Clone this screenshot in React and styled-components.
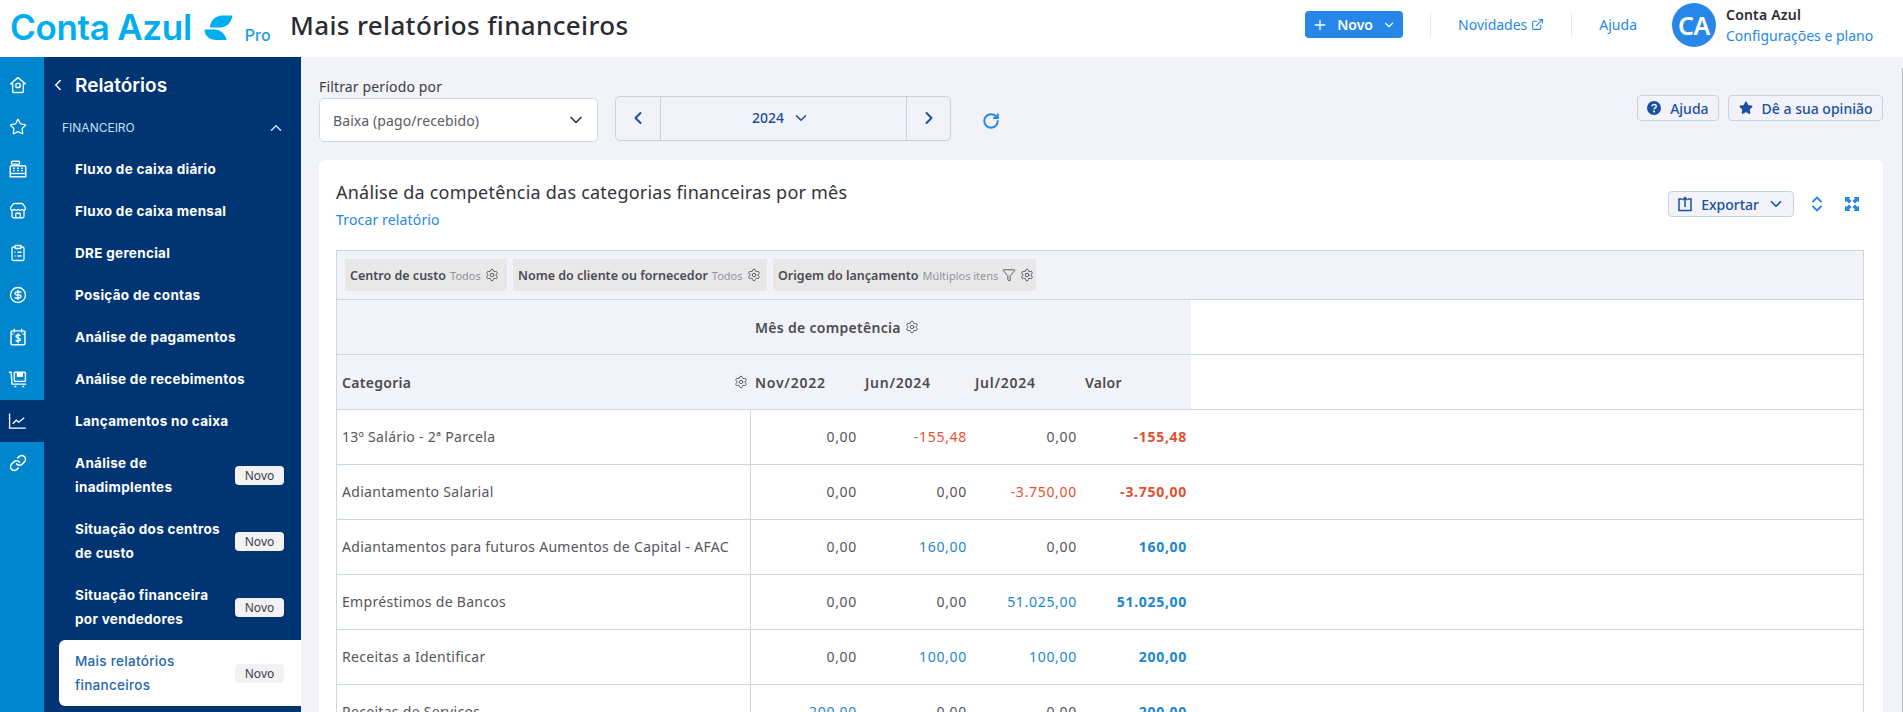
import React from "react";
import styled, { createGlobalStyle } from "styled-components";
import {
  ChevronDown,
  ChevronLeft,
  ChevronRight,
  ChevronUp,
  Plus,
  ExternalLink,
  Star,
  Store,
  ClipboardList,
  CircleDollarSign,
  RotateCw,
  Link,
  Filter,
  Settings,
} from "lucide-react";

const GlobalStyle = createGlobalStyle`
  html, body {
    margin: 0;
    height: 100%;
    overflow: hidden;
    background: #f1f3f8;
    font-family: "Noto Sans", "Open Sans", sans-serif;
  }
  * { box-sizing: border-box; }
`;

// Header
const Page = styled.div`
  width: 1903px;
  height: 712px;
  display: flex;
  flex-direction: column;
  overflow: hidden;
`;
const Header = styled.header`
  height: 57px;
  flex: none;
  background: #fff;
  display: flex;
  align-items: center;
  padding-bottom: 8px;
`;
const Logo = styled.div`
  width: 290px;
  flex: none;
  display: flex;
  align-items: center;
  padding-left: 10px;
  padding-top: 6px;
  gap: 12px;
`;
const LogoText = styled.span`
  font-family: "Inter", sans-serif;
  font-weight: 600;
  font-size: 35px;
  letter-spacing: -0.3px;
  word-spacing: -1px;
  color: #00aeef;
  line-height: 1;
`;
const LogoPro = styled.span`
  font-family: "Inter", sans-serif;
  font-weight: 500;
  font-size: 16px;
  color: #1a9de0;
  margin-top: 14px;
`;
const PageTitle = styled.h1`
  flex: 1;
  margin: 0;
  font-size: 26px;
  font-weight: 500;
  letter-spacing: 0.35px;
  color: #2b2b33;
`;
const NewButton = styled.button`
  width: 98px;
  height: 27px;
  border: 0;
  border-radius: 4px;
  background: #2687e9;
  color: #fff;
  font: 600 14px "Noto Sans", sans-serif;
  display: flex;
  align-items: center;
  justify-content: center;
  gap: 9px;
  margin-right: 27px;
`;
const Divider = styled.span`
  width: 1px;
  height: 26px;
  background: #e8ebf1;
`;
const HeaderLink = styled.a`
  font-size: 14px;
  color: #2687e9;
  display: flex;
  align-items: center;
  gap: 4px;
  margin: 0 27px;
`;
const Avatar = styled.div`
  width: 44px;
  height: 44px;
  border-radius: 50%;
  background: #2687e9;
  color: #fff;
  font-size: 25px;
  font-weight: 600;
  letter-spacing: -0.5px;
  display: flex;
  align-items: center;
  justify-content: center;
  margin: 0 10px 0 8px;
`;
const UserBlock = styled.div`
  display: flex;
  flex-direction: column;
  width: 177px;
`;
const UserName = styled.span`
  font-size: 14px;
  font-weight: 600;
  letter-spacing: 0.2px;
  color: #2b2b33;
  line-height: 21px;
`;
const UserLink = styled.span`
  font-size: 14px;
  color: #2687e9;
  line-height: 21px;
`;

// Sidebar
const Body = styled.div`
  flex: 1;
  display: flex;
  min-height: 0;
`;
const Rail = styled.nav`
  width: 44px;
  flex: none;
  background: #0085cf;
  padding-top: 7px;
`;
const RailItem = styled.div`
  height: 42px;
  display: flex;
  align-items: center;
  justify-content: center;
  padding-right: 9px;
  color: #fff;
  background: ${(props) => (props.$active ? "#003473" : "transparent")};
`;
const Side = styled.aside`
  width: 257px;
  flex: none;
  background: #003473;
  color: #fff;
`;
const SideTitle = styled.div`
  height: 56px;
  padding-left: 5px;
  display: flex;
  align-items: center;
  gap: 8px;
  font: 600 19px "Inter", sans-serif;
`;
const SideGroup = styled.div`
  height: 35px;
  padding: 0 16px 6px 18px;
  display: flex;
  align-items: center;
  justify-content: space-between;
  color: #bfe2fb;
  font: 400 12px "Inter", sans-serif;
`;
const SideItem = styled.div`
  min-height: ${(props) => (props.$tall ? "66px" : "42px")};
  margin-left: 15px;
  padding: 0 17px 0 16px;
  display: flex;
  align-items: center;
  justify-content: space-between;
  border-radius: ${(props) => (props.$selected ? "6px 0 0 6px" : "0")};
  background: ${(props) => (props.$selected ? "#fff" : "transparent")};
  color: ${(props) => (props.$selected ? "#1f67b3" : "#fff")};
  font: ${(props) => (props.$selected ? 500 : 700)} 13.5px/24px "Inter", sans-serif;
  letter-spacing: 0.3px;
`;
const SideLabel = styled.span`
  width: ${(props) => (props.$narrow ? "155px" : "auto")};
  white-space: ${(props) => (props.$narrow ? "normal" : "nowrap")};
`;
const NewBadge = styled.span`
  width: 49px;
  height: 19px;
  border-radius: 4px;
  background: #f2f2f4;
  color: #3c3c44;
  font: 400 12px/19px "Noto Sans", sans-serif;
  letter-spacing: 0;
  text-align: center;
`;

// Content
const Main = styled.main`
  position: relative;
  flex: 1;
  min-width: 0;
  padding: 0 20px 0 18px;
  &::after {
    content: "";
    position: absolute;
    top: 11px;
    right: 0;
    bottom: 0;
    width: 1px;
    background: #b8bac0;
  }
`;
const Toolbar = styled.div`
  height: 103px;
  display: flex;
  align-items: flex-start;
`;
const FilterField = styled.div`
  width: 279px;
  padding-top: 19px;
  margin-right: 17px;
`;
const FieldLabel = styled.div`
  font-size: 14px;
  line-height: 22px;
  letter-spacing: 0.15px;
  color: #3c3c44;
`;
const Select = styled.div`
  height: 44px;
  background: #fff;
  border: 1px solid #cfd8e4;
  border-radius: 5px;
  padding: 0 11px 0 13px;
  display: flex;
  align-items: center;
  justify-content: space-between;
  font-size: 14px;
  letter-spacing: 0.1px;
  color: #5a5a64;
`;
const YearStepper = styled.div`
  width: 336px;
  height: 45px;
  margin-top: 39px;
  border: 1px solid #c5d2e0;
  border-radius: 5px;
  display: grid;
  grid-template-columns: 44px 1fr 44px;
  color: #1b4fa0;
`;
const StepCell = styled.div`
  display: flex;
  align-items: center;
  justify-content: center;
  gap: 8px;
  padding: ${(props) => (props.$year ? "0 5px 2px 0" : "0 0 2px")};
  font-size: 14px;
  font-weight: 500;
  border-left: ${(props) => (props.$line ? "1px solid #c5d2e0" : "0")};
`;
const Refresh = styled.div`
  margin: 55px 0 0 31px;
  color: #2687e9;
  flex: 1;
`;
const ToolActions = styled.div`
  display: flex;
  gap: 9px;
  margin-top: 38px;
`;
const GhostButton = styled.button`
  height: 26px;
  padding: 0 ${(props) => props.$pad || "9.5px"};
  background: #f1f3f8;
  border: 1px solid #c5d2e0;
  border-radius: 4px;
  color: #1b4fa0;
  font: 500 14px "Noto Sans", sans-serif;
  display: flex;
  align-items: center;
  gap: ${(props) => props.$gap || "9px"};
`;
const Card = styled.section`
  background: #fff;
  border-radius: 6px 6px 0 0;
  height: 560px;
  padding: 20px 19px 0 17px;
`;
const CardHead = styled.div`
  height: 70px;
  display: flex;
  justify-content: space-between;
  align-items: flex-start;
`;
const CardTitle = styled.h2`
  margin: 0;
  font-size: 18px;
  line-height: 25px;
  font-weight: 400;
  letter-spacing: 0.22px;
  color: #33333b;
`;
const SwapLink = styled.a`
  display: block;
  margin-top: 5px;
  font-size: 14px;
  line-height: 20px;
  letter-spacing: 0.15px;
  color: #2687e9;
`;
const CardActions = styled.div`
  display: flex;
  align-items: center;
  color: #2687e9;
  margin: 11px -5px 0 0;
`;
const IconSlot = styled.span`
  width: 35px;
  display: flex;
  justify-content: center;
  margin-left: ${(props) => props.$left || "0"};
`;

// Table
const Table = styled.div`
  border: 1px solid #cdd6e2;
  border-bottom: 0;
  color: #55555d;
`;
const FilterRow = styled.div`
  height: 49px;
  background: #f1f3f8;
  border-bottom: 1px solid #cdd6e2;
  padding: 8px 0 0 8px;
  display: flex;
  gap: 6px;
`;
const Chip = styled.div`
  height: 32px;
  width: ${(props) => props.$w}px;
  background: #e8e8e8;
  padding: 0 ${(props) => props.$right || "5px"} 0 5px;
  display: flex;
  align-items: center;
  gap: 4px;
  white-space: nowrap;
  font-size: 12.5px;
  font-weight: 600;
  color: #4b4b53;
  svg {
    flex: none;
  }
`;
const ChipHint = styled.span`
  font-size: 11px;
  font-weight: 400;
  color: #94949c;
  flex: ${(props) => (props.$grow ? 1 : "none")};
`;
const HeadRow = styled.div`
  height: 55px;
  border-bottom: 1px solid #cdd6e2;
  display: flex;
`;
const HeadFill = styled.div`
  width: 854px;
  background: #f1f3f8;
  display: grid;
  grid-template-columns: 414px repeat(4, 110px);
  align-items: center;
  font-size: 14px;
  font-weight: 600;
  letter-spacing: 0.3px;
  color: #4b4b53;
`;
const HeadCell = styled.div`
  padding-left: ${(props) => (props.$between ? "5px" : "4px")};
  display: flex;
  align-items: center;
  justify-content: ${(props) => (props.$between ? "space-between" : "flex-start")};
  padding-right: ${(props) => (props.$between ? "3px" : "0")};
  gap: 4px;
  white-space: nowrap;
  letter-spacing: ${(props) => (props.$month ? "0.75px" : "inherit")};
  grid-column: ${(props) => props.$span || "auto"};
`;
const Row = styled.div`
  height: 55px;
  border-bottom: 1px solid #cdd6e2;
  display: grid;
  grid-template-columns: 414px repeat(4, 110px);
  font-size: 14px;
`;
const NameCell = styled.div`
  padding: 0 0 1px 5px;
  display: flex;
  align-items: center;
  border-right: 1px solid #cdd6e2;
  white-space: nowrap;
  letter-spacing: 0.3px;
`;
const ValueCell = styled.div`
  padding: 0 4px 1px 0;
  display: flex;
  align-items: center;
  justify-content: flex-end;
  letter-spacing: 0.7px;
  font-weight: ${(props) => (props.$total ? 700 : 400)};
  color: ${(props) =>
    props.$kind === "neg" ? "#e2512f" : props.$kind === "pos" ? "#1c86d1" : "#55555d"};
`;

// Icons with no close match in the package
function CashIcon() {
  return (
    <svg width="18" height="18" viewBox="0 0 22 22" fill="none" stroke="#fff" strokeWidth="1.7">
      <rect x="3" y="1.500" width="10" height="3.500" rx="1" />
      <path d="M3 7h16a1.500 1.500 0 0 1 1.500 1.500V20.500H1.500V8.500A1.500 1.500 0 0 1 3 7Z" />
      <path d="M1.500 16.500h19" />
      <path d="M5 10h2M10 10h2M15 10h2M5 13h2M10 13h2M15 13h2" />
    </svg>
  );
}
function BillIcon() {
  return (
    <svg width="18" height="18" viewBox="0 0 22 22" fill="none" stroke="#fff" strokeWidth="1.8">
      <rect x="2.500" y="3.500" width="17" height="17" rx="1.500" />
      <path d="M6.500 1v4.500M15.500 1v4.500M2.500 7.500h3M16.500 7.500h3" />
      <path d="M14 9.500c-.5-.8-1.500-1-3-1-1.400 0-2.500.6-2.500 1.800 0 2.600 5.500 1.200 5.500 3.900 0 1.200-1.200 1.800-3 1.800-1.300 0-2.400-.4-3-1.200M11 6.500v12" strokeWidth="1.600" />
    </svg>
  );
}
function CartIcon() {
  return (
    <svg width="19" height="18" viewBox="0 0 24 22" fill="none" stroke="#fff" strokeWidth="1.8">
      <path d="M1 2.500h3l1 15h18" />
      <rect x="8" y="2.500" width="14" height="11.500" rx="1" />
      <path d="M12 2.500v5h6v-5" fill="#fff" />
      <path d="M8 20.500h2.500M18 20.500h2.500" strokeWidth="2" />
    </svg>
  );
}
function ChartIcon() {
  return (
    <svg width="19" height="18" viewBox="0 0 24 22" fill="none" stroke="#fff" strokeWidth="1.7">
      <path d="M2 1.500V20h20.500" />
      <path d="M6 14.500l4.500-4.500 3 2.500 7-5.500" />
    </svg>
  );
}
function HomeIcon() {
  return (
    <svg width="18" height="18" viewBox="0 0 22 22" fill="none" stroke="#fff" strokeWidth="1.7">
      <path d="M11 2 2 9.500h2.500V19a1.200 1.200 0 0 0 1.200 1.200h10.600A1.200 1.200 0 0 0 17.500 19V9.500H20L11 2Z" strokeLinejoin="round" />
      <rect x="8.500" y="9" width="5" height="5" rx="1" />
    </svg>
  );
}
function GearIcon({ size = 14 }) {
  return <Settings size={size} strokeWidth={1.5} />;
}
function LeafIcon() {
  return (
    <svg width="29" height="26" viewBox="0 0 29 26" fill="#00aeef">
      <path d="M28.500 0.500C27.500 7 23 12.500 16 12.500H6C6 6 11.500 0.500 18.500 0.500H28.500Z" />
      <path d="M0.500 14.500H11C16 14.500 21.500 19 22.500 25H12C6 25 0.500 21 0.500 14.500Z" />
    </svg>
  );
}
function ExportIcon() {
  return (
    <svg width="16" height="16" viewBox="0 0 16 16" fill="none" stroke="currentColor" strokeWidth="1.5">
      <path d="M5 3H2v11.500h12V3h-3" />
      <path d="M8 11V1.500M5.500 4 8 1.500 10.500 4" />
    </svg>
  );
}
function ExpandVerticalIcon() {
  return (
    <svg width="14" height="18" viewBox="0 0 14 18" fill="none" stroke="currentColor" strokeWidth="1.8">
      <path d="M2.500 7 7 2.500 11.500 7M2.500 11 7 15.500 11.500 11" />
    </svg>
  );
}
function FullscreenIcon() {
  return (
    <svg width="14" height="14" viewBox="0 0 14 14" fill="currentColor">
      <path d="M0 0h5.500L4 1.500 6.500 4 4 6.500 1.500 4 0 5.500V0ZM14 0v5.500L12.500 4 10 6.500 7.500 4 10 1.500 8.500 0H14ZM0 14V8.500L1.500 10 4 7.500 6.500 10 4 12.500 5.500 14H0ZM14 14H8.500l1.500-1.500L7.500 10 10 7.500l2.500 2.500L14 8.500V14Z" />
    </svg>
  );
}
function HelpIcon() {
  return (
    <svg width="14" height="14" viewBox="0 0 14 14">
      <circle cx="7" cy="7" r="7" fill="currentColor" />
      <path d="M4.800 5.300C5 4 6 3.400 7.100 3.400c1.300 0 2.200.8 2.200 1.900 0 1.700-2.200 1.600-2.200 3.100" fill="none" stroke="#f1f3f8" strokeWidth="1.5" />
      <circle cx="7.100" cy="10.500" r="1" fill="#f1f3f8" />
    </svg>
  );
}

const railIcons = [
  <HomeIcon />,
  <Star size={18} strokeWidth={1.7} />,
  <CashIcon />,
  <Store size={18} strokeWidth={1.7} />,
  <ClipboardList size={18} strokeWidth={1.7} />,
  <CircleDollarSign size={18} strokeWidth={1.7} />,
  <BillIcon />,
  <CartIcon />,
  <ChartIcon />,
  <Link size={18} strokeWidth={2} />,
];

const menu = [
  { label: "Fluxo de caixa diário" },
  { label: "Fluxo de caixa mensal" },
  { label: "DRE gerencial" },
  { label: "Posição de contas" },
  { label: "Análise de pagamentos" },
  { label: "Análise de recebimentos" },
  { label: "Lançamentos no caixa" },
  { label: "Análise de inadimplentes", isNew: true },
  { label: "Situação dos centros de custo", isNew: true },
  { label: "Situação financeira por vendedores", isNew: true },
  { label: "Mais relatórios financeiros", isNew: true, selected: true },
];

const rows = [
  ["13º Salário - 2ª Parcela", "0,00", "-155,48", "0,00", "-155,48"],
  ["Adiantamento Salarial", "0,00", "0,00", "-3.750,00", "-3.750,00"],
  ["Adiantamentos para futuros Aumentos de Capital - AFAC", "0,00", "160,00", "0,00", "160,00"],
  ["Empréstimos de Bancos", "0,00", "0,00", "51.025,00", "51.025,00"],
  ["Receitas a Identificar", "0,00", "100,00", "100,00", "200,00"],
  ["Receitas de Serviços", "200,00", "0,00", "0,00", "200,00"],
];

const kindOf = (value) => {
  if (value.startsWith("-")) return "neg";
  if (value === "0,00") return "zero";
  return "pos";
};

export default function App() {
  return (
    <Page>
      <GlobalStyle />
      <Header>
        <Logo>
          <LogoText>Conta Azul</LogoText>
          <LeafIcon />
          <LogoPro>Pro</LogoPro>
        </Logo>
        <PageTitle>Mais relatórios financeiros</PageTitle>
        <NewButton>
          <Plus size={16} strokeWidth={2} />
          Novo
          <ChevronDown size={14} />
        </NewButton>
        <Divider />
        <HeaderLink>
          Novidades <ExternalLink size={13} />
        </HeaderLink>
        <Divider />
        <HeaderLink>Ajuda</HeaderLink>
        <Avatar>CA</Avatar>
        <UserBlock>
          <UserName>Conta Azul</UserName>
          <UserLink>Configurações e plano</UserLink>
        </UserBlock>
      </Header>
      <Body>
        <Rail>
          {railIcons.map((icon, i) => (
            <RailItem key={i} $active={i === 8}>
              {icon}
            </RailItem>
          ))}
        </Rail>
        <Side>
          <SideTitle>
            <ChevronLeft size={18} />
            Relatórios
          </SideTitle>
          <SideGroup>
            FINANCEIRO
            <ChevronUp size={18} />
          </SideGroup>
          {menu.map((item) => (
            <SideItem key={item.label} $tall={item.isNew} $selected={item.selected}>
              <SideLabel $narrow={item.isNew}>{item.label}</SideLabel>
              {item.isNew && <NewBadge>Novo</NewBadge>}
            </SideItem>
          ))}
        </Side>
        <Main>
          <Toolbar>
            <FilterField>
              <FieldLabel>Filtrar período por</FieldLabel>
              <Select>
                Baixa (pago/recebido)
                <ChevronDown size={20} color="#33333b" />
              </Select>
            </FilterField>
            <YearStepper>
              <StepCell>
                <ChevronLeft size={20} strokeWidth={2.4} />
              </StepCell>
              <StepCell $line $year>
                2024 <ChevronDown size={18} strokeWidth={2} />
              </StepCell>
              <StepCell $line>
                <ChevronRight size={20} strokeWidth={2.4} />
              </StepCell>
            </YearStepper>
            <Refresh>
              <RotateCw size={18} strokeWidth={2.6} />
            </Refresh>
            <ToolActions>
              <GhostButton>
                <HelpIcon />
                Ajuda
              </GhostButton>
              <GhostButton>
                <Star size={14} fill="currentColor" />
                Dê a sua opinião
              </GhostButton>
            </ToolActions>
          </Toolbar>
          <Card>
            <CardHead>
              <div>
                <CardTitle>Análise da competência das categorias financeiras por mês</CardTitle>
                <SwapLink>Trocar relatório</SwapLink>
              </div>
              <CardActions>
                <GhostButton $pad="8px" $gap="8px">
                  <ExportIcon />
                  Exportar
                  <ChevronDown size={18} strokeWidth={2.2} />
                </GhostButton>
                <IconSlot $left="5px">
                  <ExpandVerticalIcon />
                </IconSlot>
                <IconSlot>
                  <FullscreenIcon />
                </IconSlot>
              </CardActions>
            </CardHead>
            <Table>
              <FilterRow>
                <Chip $w={162}>
                  Centro de custo <ChipHint>Todos</ChipHint> <GearIcon />
                </Chip>
                <Chip $w={254}>
                  Nome do cliente ou fornecedor <ChipHint>Todos</ChipHint> <GearIcon />
                </Chip>
                <Chip $w={263} $right="9px">
                  Origem do lançamento <ChipHint $grow>Múltiplos itens</ChipHint>
                  <Filter size={14} strokeWidth={1.5} /> <GearIcon />
                </Chip>
              </FilterRow>
              <HeadRow>
                <HeadFill>
                  <HeadCell $span="2 / span 4">
                    Mês de competência <GearIcon />
                  </HeadCell>
                </HeadFill>
              </HeadRow>
              <HeadRow>
                <HeadFill>
                  <HeadCell $between>
                    Categoria <GearIcon />
                  </HeadCell>
                  <HeadCell $month>Nov/2022</HeadCell>
                  <HeadCell $month>Jun/2024</HeadCell>
                  <HeadCell $month>Jul/2024</HeadCell>
                  <HeadCell>Valor</HeadCell>
                </HeadFill>
              </HeadRow>
              {rows.map(([name, ...values]) => (
                <Row key={name}>
                  <NameCell>{name}</NameCell>
                  {values.map((v, i) => (
                    <ValueCell key={i} $kind={kindOf(v)} $total={i === 3}>
                      {v}
                    </ValueCell>
                  ))}
                </Row>
              ))}
            </Table>
          </Card>
        </Main>
      </Body>
    </Page>
  );
}
